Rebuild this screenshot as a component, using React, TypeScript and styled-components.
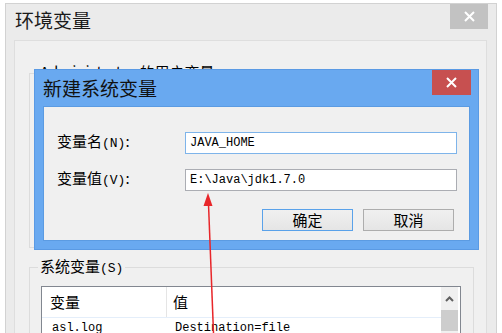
import React from "react";
import styled, { createGlobalStyle } from "styled-components";

const Global = createGlobalStyle`
  html, body { margin: 0; padding: 0; background: #ffffff; overflow: hidden; }
  body { font-family: "Noto Sans CJK SC", "Noto Sans", sans-serif; color: #000; }
  #root { width: 502px; height: 333px; position: relative; overflow: hidden; }
`;

const Window = styled.div`
  margin: 3px 0 0 5px;
  width: 490px;
  height: 360px;
  border: 1px solid #d2d2d2;
  background: #ebebeb;
  display: flex;
  flex-direction: column;
`;

const TitleBar = styled.div`
  height: 36px;
  display: flex;
  align-items: flex-start;
  justify-content: space-between;
  flex-shrink: 0;
`;

const WindowTitle = styled.div`
  margin: 3px 0 0 9px;
  font-size: 19px;
  line-height: 26px;
  color: #1a1a1a;
`;

const CloseButton = styled.div<{ $bg: string; $w: number; $h: number; $mr: number }>`
  width: ${(p) => p.$w}px;
  height: ${(p) => p.$h}px;
  margin-right: ${(p) => p.$mr}px;
  background: ${(p) => p.$bg};
  display: flex;
  align-items: center;
  justify-content: center;
`;

const Panel = styled.div`
  flex: 1;
  margin: 0 9px 0 8px;
  background: #f0f0f0;
  border: 1px solid #dedede;
  border-bottom: none;
  display: flex;
  flex-direction: column;
`;

const Group = styled.fieldset<{ $h: number; $mt: number }>`
  margin: ${(p) => p.$mt}px 12px 0 14px;
  padding: 0;
  border: 1px solid #dcdcdc;
  height: ${(p) => p.$h}px;
  box-sizing: border-box;
  min-width: 0;
  flex-shrink: 0;
`;

const Legend = styled.legend`
  margin-left: 8px;
  padding: 0 2px;
  font-size: 15px;
  line-height: 20px;
  color: #000;
`;

const Mnemonic = styled.span`
  font-family: "Liberation Mono", monospace;
  font-size: 13px;
`;

const List = styled.div`
  margin: 7px 12px 0 11px;
  border: 1px solid #828790;
  background: #fff;
  height: 80px;
  display: flex;
`;

const Table = styled.div`
  flex: 1;
  display: flex;
  flex-direction: column;
`;

const HeaderRow = styled.div`
  height: 30px;
  display: flex;
  border-bottom: 1px solid #e4eefa;
`;

const HeaderCell = styled.div<{ $w?: number; $sep?: boolean }>`
  ${(p) => (p.$w ? `width: ${p.$w}px;` : "flex: 1;")}
  ${(p) => (p.$sep ? "border-right: 1px solid #e5e5e5;" : "")}
  padding-left: ${(p) => (p.$sep ? 8 : 6)}px;
  box-sizing: border-box;
  font-size: 15px;
  line-height: 30px;
`;

const Row = styled.div`
  height: 20px;
  display: flex;
`;

const Cell = styled.div<{ $w?: number }>`
  ${(p) => (p.$w ? `width: ${p.$w}px;` : "flex: 1;")}
  padding-left: ${(p) => (p.$w ? 10 : 8)}px;
  box-sizing: border-box;
  font-family: "Liberation Mono", monospace;
  font-size: 12px;
  line-height: 20px;
  white-space: nowrap;
`;

const ScrollBar = styled.div`
  width: 17px;
  margin-right: 2px;
  background: #f0f0f0;
  display: flex;
  flex-direction: column;
  align-items: center;
`;

const ScrollArrow = styled.div`
  height: 23px;
  width: 17px;
  display: flex;
  align-items: center;
  justify-content: center;
`;

const ScrollThumb = styled.div`
  width: 17px;
  height: 21px;
  background: #cdcdcd;
`;

const Dialog = styled.div`
  position: absolute;
  left: 34px;
  top: 69px;
  width: 445px;
  height: 181px;
  box-sizing: border-box;
  background: #69a9f0;
  border: 1px solid #5a9ae4;
  display: flex;
  flex-direction: column;
`;

const DialogTitleBar = styled.div`
  height: 36px;
  display: flex;
  align-items: flex-start;
  justify-content: space-between;
  flex-shrink: 0;
`;

const DialogTitle = styled.div`
  margin: 0 0 0 8px;
  font-size: 19px;
  line-height: 36px;
  color: #111;
`;

const Client = styled.div`
  flex: 1;
  margin: 0 8px 8px 8px;
  background: #f0f0f0;
  border: 1px solid #5b9be2;
  display: flex;
  flex-direction: column;
`;

const Form = styled.div`
  display: grid;
  grid-template-columns: 128px 1fr;
  row-gap: 12px;
  align-items: center;
  padding: 23px 12px 0 13px;
`;

const FieldLabel = styled.div`
  font-size: 15px;
  line-height: 22px;
  white-space: nowrap;
`;

const Field = styled.div<{ $focus?: boolean }>`
  height: 22px;
  box-sizing: border-box;
  border: 1px solid ${(p) => (p.$focus ? "#7eb4ea" : "#abadb3")};
  background: #fff;
  padding-left: 4px;
  font-family: "Liberation Mono", monospace;
  font-size: 12px;
  line-height: 20px;
  white-space: nowrap;
`;

const ButtonRow = styled.div`
  display: flex;
  justify-content: flex-end;
  gap: 10px;
  margin-top: 17px;
  padding-right: 15px;
`;

const Button = styled.div<{ $default?: boolean }>`
  width: 91px;
  height: 22px;
  box-sizing: border-box;
  border: 1px solid ${(p) => (p.$default ? "#5aa2ea" : "#adadad")};
  background: linear-gradient(#f0f0f0, #e5e5e5);
  display: flex;
  align-items: center;
  justify-content: center;
  font-size: 15px;
  line-height: 20px;
`;

const ArrowLayer = styled.svg`
  position: absolute;
  left: 0;
  top: 0;
  pointer-events: none;
`;

const XIcon = () => (
  <svg width="11" height="11" viewBox="0 0 11 11">
    <path d="M1 1 L10 10 M10 1 L1 10" stroke="#fff" strokeWidth="2" />
  </svg>
);

export default function App() {
  return (
    <>
      <Global />
      <Window>
        <TitleBar>
          <WindowTitle>环境变量</WindowTitle>
          <CloseButton $bg="#c2c2c2" $w={38} $h={25} $mr={8}>
            <XIcon />
          </CloseButton>
        </TitleBar>
        <Panel>
          <Group $h={186} $mt={21}>
            <Legend>
              Administrator 的用户变量<Mnemonic>(U)</Mnemonic>
            </Legend>
          </Group>
          <Group $h={200} $mt={8}>
            <Legend>
              系统变量<Mnemonic>(S)</Mnemonic>
            </Legend>
            <List>
              <Table>
                <HeaderRow>
                  <HeaderCell $w={125} $sep>
                    变量
                  </HeaderCell>
                  <HeaderCell>值</HeaderCell>
                </HeaderRow>
                <Row>
                  <Cell $w={125}>asl.log</Cell>
                  <Cell>Destination=file</Cell>
                </Row>
              </Table>
              <ScrollBar>
                <ScrollArrow>
                  <svg width="9" height="6" viewBox="0 0 9 6">
                    <path d="M1 5 L4.5 1.5 L8 5" stroke="#606060" strokeWidth="2" fill="none" />
                  </svg>
                </ScrollArrow>
                <ScrollThumb />
              </ScrollBar>
            </List>
          </Group>
        </Panel>
      </Window>

      <Dialog>
        <DialogTitleBar>
          <DialogTitle>新建系统变量</DialogTitle>
          <CloseButton $bg="#c75050" $w={39} $h={25} $mr={7}>
            <XIcon />
          </CloseButton>
        </DialogTitleBar>
        <Client>
          <Form>
            <FieldLabel>
              变量名<Mnemonic>(N)</Mnemonic>:
            </FieldLabel>
            <Field $focus>JAVA_HOME</Field>
            <FieldLabel>
              变量值<Mnemonic>(V)</Mnemonic>:
            </FieldLabel>
            <Field>E:\Java\jdk1.7.0</Field>
          </Form>
          <ButtonRow>
            <Button $default>确定</Button>
            <Button>取消</Button>
          </ButtonRow>
        </Client>
      </Dialog>

      <ArrowLayer width="502" height="333" viewBox="0 0 502 333">
        <line x1="208.5" y1="204" x2="213.5" y2="333" stroke="#e8262a" strokeWidth="1.5" />
        <polygon points="208,193 203.5,206 212.5,206" fill="#e8262a" />
      </ArrowLayer>
    </>
  );
}
